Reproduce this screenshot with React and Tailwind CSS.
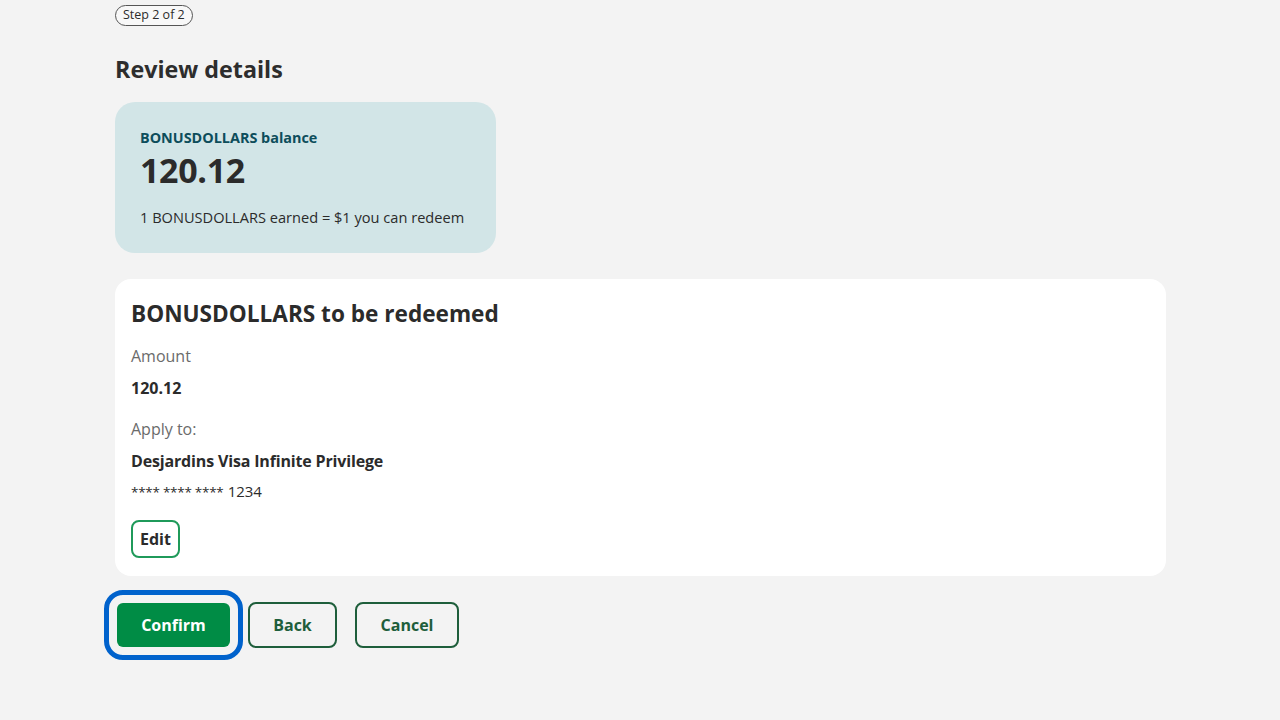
export default function App() {
  return (
    <div className="min-h-[720px] bg-[#f3f3f3] text-[#2b2b2b]" style={{ fontFamily: "'Open Sans', Lato, sans-serif" }}>
      <div className="pl-[115px] pt-[1px]">
        <div className="inline-flex items-center h-[21px] px-[7px] rounded-full border border-[#555] text-[12.5px] text-[#2b2b2b] bg-white/40">
          Step 2 of 2
        </div>

        <h1 className="mt-[27px] text-[23.3px] leading-[32px] font-bold text-[#2d2d2d]">Review details</h1>

        <div className="mt-[17px] w-[381px] h-[151px] rounded-[20px] bg-[#d2e5e7] px-[25px] pt-[27px]">
          <div className="text-[14.4px] leading-[18px] font-bold text-[#0d4d5b]">BONUSDOLLARS balance</div>
          <div className="text-[34px] leading-[46px] font-bold text-[#2b2b2b] tracking-[-0.01em]">120.12</div>
          <div className="mt-[15px] text-[14.6px] leading-[18px] text-[#2b2b2b]">1 BONUSDOLLARS earned = $1 you can redeem</div>
        </div>

        <div className="mt-[26px] w-[1051px] h-[297px] rounded-[16px] bg-white px-[16px] pt-[21px]">
          <h2 className="text-[22.6px] leading-[28px] font-bold text-[#2b2b2b]">BONUSDOLLARS to be redeemed</h2>
          <div className="mt-[18px] text-[16px] leading-[20px] text-[#6b6b6b]">Amount</div>
          <div className="mt-[12px] text-[16px] leading-[20px] font-bold">120.12</div>
          <div className="mt-[21px] text-[16px] leading-[20px] text-[#6b6b6b]">Apply to:</div>
          <div className="mt-[12px] text-[16px] leading-[20px] font-bold tracking-[-0.01em]">Desjardins Visa Infinite Privilege</div>
          <div className="mt-[10px] text-[16px] leading-[20px]">
            <span className="text-[13.5px] tracking-[-0.02em]">**** **** ****</span> <span className="text-[15px]">1234</span>
          </div>
          <button className="mt-[18px] h-[38px] px-[7px] rounded-[8px] border-2 border-[#1f9a5a] bg-white text-[16px] font-bold text-[#2b2b2b]">
            Edit
          </button>
        </div>

        <div className="mt-[26px] flex items-center gap-[18px] pl-[2px]">
          <button className="h-[44px] w-[113px] rounded-[6px] bg-[#008c45] text-white text-[16px] font-bold outline-[5px] outline-solid outline-[#0062cc] outline-offset-[8px]">
            Confirm
          </button>
          <button className="h-[46px] w-[89px] rounded-[8px] border-2 border-[#1e5e3b] text-[#1e5e3b] text-[16px] font-bold">
            Back
          </button>
          <button className="h-[46px] w-[104px] rounded-[8px] border-2 border-[#1e5e3b] text-[#1e5e3b] text-[16px] font-bold">
            Cancel
          </button>
        </div>
      </div>
    </div>
  );
}
